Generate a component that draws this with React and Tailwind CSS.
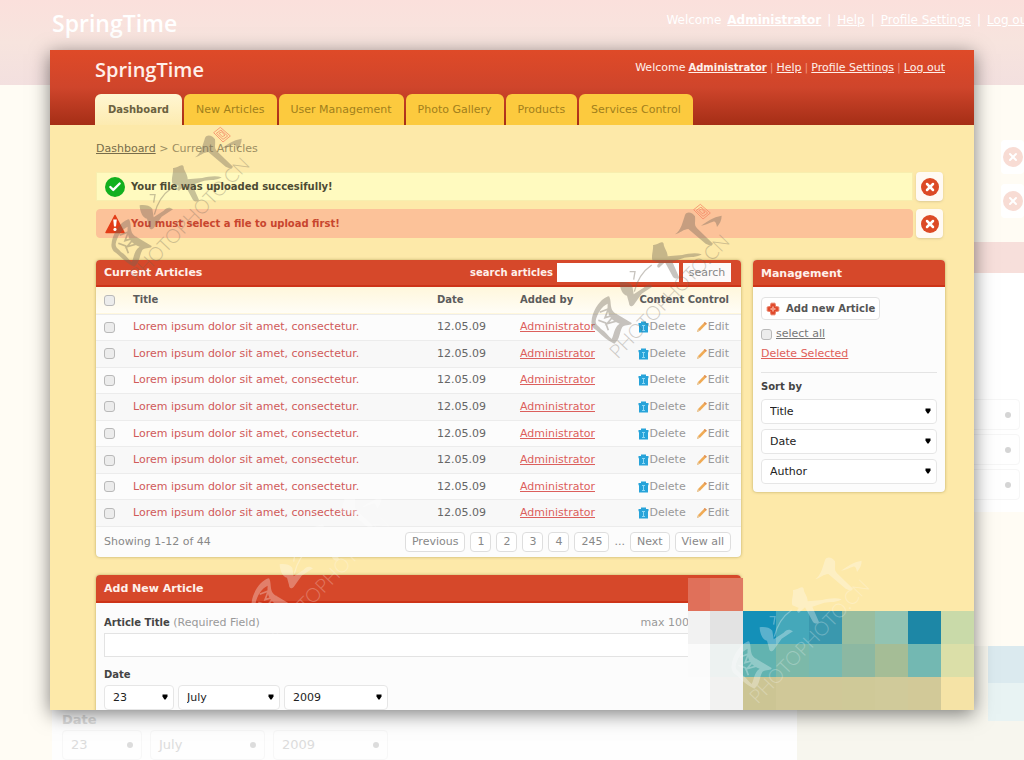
import { useState } from 'react';
import { Check, X } from 'lucide-react';

const tabs = ['Dashboard', 'New Articles', 'User Management', 'Photo Gallery', 'Products', 'Services Control'];

const articles = Array.from({ length: 8 }, (_, i) => ({
  id: i + 1,
  title: 'Lorem ipsum dolor sit amet, consectetur.',
  date: '12.05.09',
  author: 'Administrator'
}));

const pages = ['1', '2', '3', '4', '245'];

// Four rows of nine tiles, first column is narrower
const tiles = [
  'bg-[#e0705a]', 'bg-[#e07a62]', '', '', '', '', '', '', '',
  'bg-[#f2f2f2]', 'bg-[#e3e3e3]', 'bg-[#1490b8]', 'bg-[#45a8ba]', 'bg-[#3a98ae]', 'bg-[#98bd9f]', 'bg-[#92c3b2]', 'bg-[#1d87a6]', 'bg-[#c9daa9]',
  'bg-[#fbfbfb]', 'bg-[#edf2f1]', 'bg-[#62b3b0]', 'bg-[#7cb9a9]', 'bg-[#76b9b1]', 'bg-[#8cb8a2]', 'bg-[#a5bd96]', 'bg-[#73b8b2]', 'bg-[#dbdfa8]',
  'bg-[#fcfcfc]', 'bg-[#f2f2f1]', 'bg-[#ccc594]', 'bg-[#d0c898]', 'bg-[#d0c898]', 'bg-[#cfc998]', 'bg-[#d0ca9a]', 'bg-[#d2c998]', 'bg-[#f5e3a6]'
];

function TrashIcon() {
  return (
    <svg viewBox="0 0 11 12" className="h-3 w-[11px]" aria-hidden="true">
      <path d="M3 2V.5h5V2h2.5v2.2H10V11.5H1V4.2H.5V2z" fill="#27a3d9" />
      <path d="M4 4.5h3M5.5 4.5v5M4 9.5h3" stroke="#8fd8f5" strokeWidth="1" fill="none" />
    </svg>
  );
}

function PencilIcon() {
  return (
    <svg viewBox="0 0 12 12" className="h-3 w-3" aria-hidden="true">
      <path d="M1 11l1-3L8.8 1l2 1.8L4 9.8z" fill="#f0ab55" />
      <path d="M8.8 1l2 1.8-1 1-2-1.8z" fill="#dc8f5c" />
      <path d="M1 11l1-3L4 9.8z" fill="#e6c9a0" />
    </svg>
  );
}

function PlusIcon() {
  return (
    <svg viewBox="0 0 14 14" className="h-3.5 w-3.5" aria-hidden="true">
      <path d="M5 1.2h4L9.6 4.4 12.8 5v4l-3.2.6L9 12.8H5l-.6-3.2L1.2 9V5l3.2-.6z" fill="#e0492b" strokeLinejoin="round" stroke="#e87b62" />
      <path d="M7 4.5v5M4.5 7h5" stroke="#f39a85" strokeWidth="2" />
    </svg>
  );
}

function WarningIcon() {
  return (
    <svg viewBox="0 0 20 20" className="h-5 w-5" aria-hidden="true">
      <path d="M10 1.5L19 18.5H1z" fill="#e33c17" stroke="#e33c17" strokeWidth="1.5" strokeLinejoin="round" />
      <path d="M8.2 5.5h3.6l-.8 7H9z" fill="#fff" />
      <circle cx="10" cy="15.4" r="1.6" fill="#fff" />
    </svg>
  );
}

function CloseButton({ label }) {
  return (
    <button aria-label={label} className="flex w-[27px] shrink-0 items-center justify-center rounded bg-[#fffaf4] shadow-sm">
      <span className="flex h-[18px] w-[18px] items-center justify-center rounded-full bg-[#dc4a26]">
        <X className="h-3 w-3 text-white" strokeWidth={5} />
      </span>
    </button>
  );
}

function Dropdown({ label, value, className = '' }) {
  return (
    <div className={`relative ${className}`}>
      <select
        aria-label={label}
        defaultValue={value}
        className="h-[25px] w-full appearance-none rounded border border-[#e6e6e6] bg-white px-2 text-[11px] text-[#222]"
      >
        <option>{value}</option>
      </select>
      <svg viewBox="0 0 6 6" className="pointer-events-none absolute top-[9px] right-1.5 h-1.5 w-1.5" aria-hidden="true">
        <path d="M.5 .5h5v2L3.6 5.5H2.4L.5 2.5z" fill="#000" />
      </svg>
    </div>
  );
}

function Tick({ label }) {
  return (
    <input
      type="checkbox"
      aria-label={label}
      className="block h-[11px] w-[11px] appearance-none rounded-[3px] border border-[#b9b9b9] bg-[#ececec] checked:bg-[#d84527]"
    />
  );
}

function Watermark({ className, light }) {
  return (
    <svg viewBox="0 0 495 510" className={`pointer-events-none absolute h-[170px] w-[165px] ${className}`} aria-hidden="true">
      <g fill={light ? '#fff' : '#6f6658'} stroke="none" opacity={light ? 0.3 : 0.38}>
        {/* top character */}
        <path d="M270 118c18-10 24-40 30-58 6-12 22-8 30 4 2 20-4 24 6 36l48 46c-4 8-14 4-22 0l-52-44c-14 0-24 12-40 16z" />
        <path d="M348 92c18-12 36-26 62-30 0 14-6 24-14 34-2-10-4-18-12-16-12 4-22 10-36 12z" />
        {/* second character */}
        <path d="M204 150c12 2 26-16 32-4 0 12 12 22 12 38l44-4c18-4 40-8 58-2-12 10-36 8-52 10l-36 12 20 46c-2 6-12 6-18 0l-24-44-18 16c-8 0-6-10 0-14l-20-8c-4-16 4-30 2-46z" />
        {/* third character */}
        <path d="M104 262c14-2 30 0 38 10l4 26 30-20c8-10 18-12 28-4l-34 22-24 34c-8 8-14 2-14-6l-6-22c-12 0-22-22-22-40z" />
        <path d="M134 230l16 0-4 24M148 290c8-34 26-62 52-80" fill="none" stroke={light ? '#fff' : '#6f6658'} strokeWidth="4" />
        {/* bottom character */}
        <path d="M20 376c4-34 30-68 52-72 10 16-2 42 24 54l44 26c0 10-18 2-28 12-10 18-6 36-24 50-26-10-46-36-62-46-6-8-8-16-6-24zm12 2c0 14 10 14 16 24 14 8 22 22 32 30 8-14 6-34 24-46-22-8-40-24-36-60-18 8-32 30-36 52z" />
        <path d="M44 352l26-10-10 26 28-8-22 26 30-8M40 376l22 8 8 22" fill="none" stroke={light ? '#fff' : '#6f6658'} strokeWidth="5" />
        <text x="0" y="0" transform="translate(98 494) rotate(-46)" fontFamily="Lato, sans-serif" fontSize="58" fontWeight="300" opacity="0.85">
          PHOTOPHOTO.CN
        </text>
      </g>
      {!light && (
        <g fill="none" stroke="#f58a66" strokeWidth="3" opacity="0.8">
          <path d="M326 44l20-16 30 26-22 18zM334 46l14-10 20 18-14 10zM342 46l8-4 10 10-8 4z" />
        </g>
      )}
    </svg>
  );
}

// Enlarged pale copy of the page that sits behind the window
function Backdrop() {
  return (
    <div className="absolute inset-0 flex flex-col bg-[#fffcf4]" aria-hidden="true" inert>
      <div className="flex h-[85px] items-start justify-between overflow-hidden bg-linear-to-b from-[#fbe0dc] via-[#f7e4de] to-[#f3e0df] pl-[52px] text-white">
        <span className="pt-2 text-[23px] leading-[30px] font-semibold font-['Open_Sans',sans-serif]">SpringTime</span>
        <span className="-mr-2 flex gap-1.5 pt-3 text-xs whitespace-nowrap">
          <span>Welcome</span>
          <b className="underline">Administrator</b>
          <span>|</span>
          <u>Help</u>
          <span>|</span>
          <u>Profile Settings</u>
          <span>|</span>
          <u>Log out</u>
        </span>
      </div>
      <div className="flex h-[157px] flex-col items-end justify-end gap-2.5 pb-6">
        {[1, 2].map((n) => (
          <span key={n} className="flex h-[34px] w-[23px] items-center justify-center rounded bg-white">
            <span className="flex h-5 w-5 items-center justify-center rounded-full bg-[#f8dcd4]">
              <X className="h-3 w-3 text-white" strokeWidth={4} />
            </span>
          </span>
        ))}
      </div>
      <div className="h-[31px] bg-linear-to-r from-[#fffcf4] from-50% to-[#f7dfdb] to-50%" />
      <div className="flex h-[239px] flex-col items-end justify-end gap-1 bg-linear-to-r from-[#fffcf4] from-50% to-white to-50% pr-1 pb-3">
        {[1, 2, 3].map((n) => (
          <span key={n} className="flex h-[31px] w-[200px] items-center justify-end rounded border border-[#f6f6f6] pr-2">
            <span className="h-1.5 w-1.5 rounded-full bg-[#d5d5d5]" />
          </span>
        ))}
      </div>
      <div className="h-[134px]" />
      <div className="flex flex-1 pl-[52px]">
        <div className="flex w-[745px] flex-col justify-end bg-[#fefefe] px-2.5 text-[13px] text-[#dcdcdc]">
          <b className="leading-5">Date</b>
          <div className="flex h-[30px] gap-2">
            <span className="flex w-[80px] items-center justify-between rounded border border-[#f7f7f7] px-2">23 <i className="h-1.5 w-1.5 rounded-full bg-current" /></span>
            <span className="flex w-[115px] items-center justify-between rounded border border-[#f7f7f7] px-2">July <i className="h-1.5 w-1.5 rounded-full bg-current" /></span>
            <span className="flex w-[115px] items-center justify-between rounded border border-[#f7f7f7] px-2">2009 <i className="h-1.5 w-1.5 rounded-full bg-current" /></span>
          </div>
        </div>
        <div className="flex flex-1 flex-col items-end bg-[#f7f6ee]">
          <div className="h-[37px] w-9 bg-[#dbeaef]" />
          <div className="h-[38px] w-9 bg-[#e8f3f3]" />
        </div>
      </div>
    </div>
  );
}

export default function App() {
  const [activeTab, setActiveTab] = useState('Dashboard');

  return (
    <div className="relative flex h-screen flex-col overflow-hidden p-[50px] font-['DejaVu_Sans',sans-serif] text-[11px] leading-4 text-[#666]">
      <Backdrop />

      <div className="relative flex-1 overflow-hidden bg-[#fde9a9] shadow-[0_4px_18px_rgba(0,0,0,0.5)]">
        {/* Header */}
        <header className="bg-linear-to-b from-[#df4a28] via-[#cf452b] to-[#a52e16] pr-[29px] pl-[45px]">
          <div className="flex h-11 items-start justify-between pt-1.5 text-[#fff0ea]">
            <h1 className="text-xl leading-7 font-semibold font-['Open_Sans',sans-serif]">SpringTime</h1>
            <nav className="flex gap-[3px] pt-1">
              <span>Welcome</span>
              <a href="#admin" className="text-[10px] font-bold underline">Administrator</a>
              <span className="text-[#f0927c]">|</span>
              <a href="#help" className="underline">Help</a>
              <span className="text-[#f0927c]">|</span>
              <a href="#profile" className="underline">Profile Settings</a>
              <span className="text-[#f0927c]">|</span>
              <a href="#logout" className="underline">Log out</a>
            </nav>
          </div>
          <div className="flex gap-0.5">
            {tabs.map((tab) => (
              <button
                key={tab}
                onClick={() => setActiveTab(tab)}
                className={`h-[31px] rounded-t-md ${
                  activeTab === tab
                    ? 'bg-linear-to-b from-[#fff6d2] to-[#fdebb0] px-[13px] text-[10px] font-bold text-[#6b6140]'
                    : 'bg-[#fcca3e] px-3 text-[#a17f1c]'
                }`}
              >
                {tab}
              </button>
            ))}
          </div>
        </header>

        <main className="pr-[29px] pl-[46px]">
          <div className="pt-4 pb-[15px] text-[#9b8d62]">
            <a href="#dashboard" className="text-[#776c4a] underline">Dashboard</a> &gt; Current Articles
          </div>

          {/* Messages */}
          <div className="flex flex-col gap-2 pr-0.5 text-[10px] font-bold">
            <div className="flex gap-[3px]">
              <div className="flex h-[29px] flex-1 items-center gap-1.5 border border-[#f8eeae] bg-[#fffabf] px-2 text-[#4c4a33]">
                <span className="flex h-5 w-5 items-center justify-center rounded-full bg-[#12b01f]">
                  <Check className="h-3.5 w-3.5 text-white" strokeWidth={4} />
                </span>
                Your file was uploaded succesifully!
              </div>
              <CloseButton label="Close success message" />
            </div>
            <div className="flex gap-[3px]">
              <div className="flex h-[29px] flex-1 items-center gap-1.5 rounded-sm border border-[#fcc299] bg-[#fcc299] px-2 text-[#c8452e]">
                <WarningIcon />
                You must select a file to upload first!
              </div>
              <CloseButton label="Close error message" />
            </div>
          </div>

          <div className="flex items-start gap-3 pt-[22px]">
            <div className="min-w-0 flex-1">
              {/* Articles */}
              <section className="overflow-hidden rounded bg-[#fcfcfc] shadow-[0_0_3px_rgba(120,100,20,0.5)]">
                <div className="flex h-[27px] items-center border-b-2 border-[#cd3418] bg-[#d6482a] pr-2.5 pl-2 font-bold text-[#fff0ea]">
                  <h2 className="flex-1">Current Articles</h2>
                  <label htmlFor="search" className="pr-1 text-[10px]">search articles</label>
                  <input id="search" className="h-[19px] w-[122px] bg-white px-1 font-normal text-[#555]" />
                  <button className="ml-1 h-[19px] w-12 bg-[#fdfafa] font-normal text-[#888]">search</button>
                </div>
                <table className="h-[240px] w-full table-fixed text-left">
                  <thead>
                    <tr className="h-[27px] border-b border-[#ececec] bg-linear-to-b from-[#fff7dc] to-[#fffdf6] text-[10px] text-[#5c5c5c]">
                      <th className="w-[37px] pl-2"><Tick label="Select all rows" /></th>
                      <th>Title</th>
                      <th className="w-[83px]">Date</th>
                      <th className="w-[105px]">Added by</th>
                      <th className="w-[116px] pr-3 text-right whitespace-nowrap">Content Control</th>
                    </tr>
                  </thead>
                  <tbody>
                    {articles.map((article) => (
                      <tr key={article.id} className="border-b border-[#ececec] even:bg-[#f8f8f8]">
                        <td className="pl-2"><Tick label={`Select row ${article.id}`} /></td>
                        <td><a href="#article" className="text-[#d05a5a]">{article.title}</a></td>
                        <td>{article.date}</td>
                        <td><a href="#author" className="text-[#dc5f5c] underline">{article.author}</a></td>
                        <td className="pr-3">
                          <div className="flex justify-end gap-2.5 text-[#999]">
                            <button className="flex items-center gap-px"><TrashIcon />Delete</button>
                            <button className="flex items-center"><PencilIcon />Edit</button>
                          </div>
                        </td>
                      </tr>
                    ))}
                  </tbody>
                </table>
                <div className="flex h-[30px] items-center justify-between pr-2.5 pl-2 text-[#888]">
                  <span>Showing 1-12 of 44</span>
                  <div className="flex items-center gap-[5px]">
                    <button className="h-5 rounded border border-[#dedede] bg-white px-1.5">Previous</button>
                    {pages.map((page) => (
                      <button key={page} className="h-5 rounded border border-[#dedede] bg-white px-1.5">{page}</button>
                    ))}
                    <span>...</span>
                    <button className="h-5 rounded border border-[#dedede] bg-white px-1.5">Next</button>
                    <button className="h-5 rounded border border-[#dedede] bg-white px-1.5">View all</button>
                  </div>
                </div>
              </section>

              {/* Add article form */}
              <section className="mt-[18px] overflow-hidden rounded bg-[#fcfcfc] pb-10 shadow-[0_0_3px_rgba(120,100,20,0.5)]">
                <h2 className="h-7 border-b-2 border-[#cd3418] bg-[#d6482a] px-2 leading-7 font-bold text-[#fff0ea]">Add New Article</h2>
                <div className="px-2 pt-3">
                  <div className="flex justify-between text-[#999]">
                    <label htmlFor="title"><b className="text-[10px] text-[#444]">Article Title</b> (Required Field)</label>
                    <span className="pr-11">max 100</span>
                  </div>
                  <input id="title" className="mt-0.5 h-6 w-full border border-[#e3e3e3] bg-white px-2" />
                  <div className="pt-2.5 text-[10px] font-bold text-[#444]">Date</div>
                  <div className="flex gap-1 pt-0.5">
                    <Dropdown label="Day" value="23" className="w-[70px]" />
                    <Dropdown label="Month" value="July" className="w-[102px]" />
                    <Dropdown label="Year" value="2009" className="w-[104px]" />
                  </div>
                </div>
              </section>
            </div>

            {/* Management */}
            <aside className="w-[192px] shrink-0 overflow-hidden rounded bg-[#fcfcfc] shadow-[0_0_3px_rgba(120,100,20,0.5)]">
              <h2 className="h-[27px] border-b-2 border-[#cd3418] bg-[#d6482a] px-2 leading-7 font-bold text-[#fff0ea]">Management</h2>
              <div className="px-2 pt-2.5 pb-2">
                <button className="flex h-[23px] items-center gap-1.5 rounded border border-[#e2e2e2] bg-white px-1 text-[10px] font-bold text-[#555]">
                  <PlusIcon />
                  Add new Article
                </button>
                <div className="flex items-center gap-1 pt-1.5">
                  <Tick label="select all" />
                  <a href="#all" className="text-[#777] underline">select all</a>
                </div>
                <a href="#delete" className="mt-1 block text-[#e0605a] underline">Delete Selected</a>
                <hr className="mt-2.5 border-[#e4e4e4]" />
                <div className="pt-1.5 text-[10px] font-bold text-[#444]">Sort by</div>
                <div className="flex flex-col gap-[5px] pt-1">
                  <Dropdown label="Sort by title" value="Title" />
                  <Dropdown label="Sort by date" value="Date" />
                  <Dropdown label="Sort by author" value="Author" />
                </div>
              </div>
            </aside>
          </div>
        </main>

        {/* Colour tiles */}
        <div className="absolute right-0 bottom-0 grid grid-cols-[22px_repeat(8,33px)]" aria-hidden="true">
          {tiles.map((tile, i) => (
            <span key={i} className={`h-[33px] ${tile}`} />
          ))}
        </div>

        <Watermark className="top-[68px] left-[55px]" />
        <Watermark className="top-[145px] left-[535px]" />
        <Watermark className="top-[490px] left-[675px]" light />
        <Watermark className="top-[427px] left-[195px]" light />
      </div>
    </div>
  );
}
